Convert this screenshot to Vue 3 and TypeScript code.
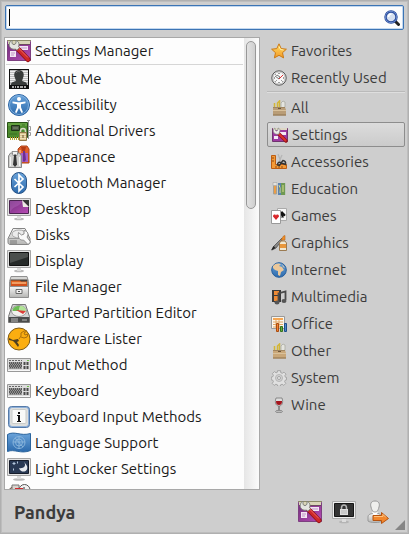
<script setup lang="ts">
import { ref } from 'vue'

interface Entry {
  name: string
  icon: string
}

const query = ref<string>('')
const selected = ref<string>('Settings')

/* Artwork drawn on a 24 unit grid */
const large: Record<string, string> = {
  settings: `<path d="M.5 2.500h23v19H.5z" fill="url(#purple)" stroke="#7d3f80"/><path d="M1 2h22v3H1z" fill="#d9d6b8"/><path d="M0 1.500h24" stroke="#8d8a69"/><path d="M1 5.500h22" stroke="#6b4a5e"/><path d="M12 7h9v4h-9zM3 12h6v6H3z" fill="#f3e6f4"/><path d="M14 9h6M4 14h4M4 16h3" stroke="#c093c6"/><path d="M10.500 9.500L21 20.500" stroke="#8a1215" stroke-width="5" stroke-linecap="round"/><path d="M10.500 9.500L21 20.500" stroke="#cf2729" stroke-width="3.600" stroke-linecap="round"/><path d="M11.500 9L21 18.500" stroke="#ee6a64" stroke-width="1"/><path d="M5 1.200v3.300l2 1.200L9 4.300V1.400c3 1 3.500 4 2.500 6l1 1.300-2.700 2.600L8.500 10C5 11 2 8.500 2.200 5.500 2.300 3.500 3.500 1.800 5 1.200z" fill="#e4e6e0" stroke="#7b7f76" stroke-width=".9"/>`,
  about: `<path d="M2 2h20v20H2z" fill="#101010"/><path d="M3 3h18v15H3z" fill="#bdbdbd"/><path d="M3 4.500h18M3 6.500h18M3 8.500h18M3 10.500h18M3 12.500h18M3 14.500h18" stroke="#efefef"/><path d="M4 18c0-3 2-3 5-4l-1-3C6 7 8 3 12 3s6 4 4 8l-1 3c3 1 5 1 5 4z" fill="#393c3b"/><path d="M9 6c1-2 3-2 4-1" stroke="#666" fill="none"/><path d="M5 20h2m1 0h1m1 0h2m1 0h3m1 0h2" stroke="#ddd" stroke-width="1.500"/>`,
  access: `<circle cx="12" cy="12" r="10.500" fill="url(#blue)" stroke="#2a63a3"/><circle cx="12" cy="12" r="9.500" fill="none" stroke="#8ab9e4" stroke-width=".8"/><circle cx="12" cy="6" r="2" fill="#fff"/><path d="M5.500 8.500L11 9.300h2l5.500-.8v1.700L14 11.300v3l2 5-1.500.7L12 15l-2.500 5-1.500-.7 2-5v-3l-4.500-1.100z" fill="#fff"/>`,
  drivers: `<path d="M20 1.500h3M21.500 1v19M21 7.500h2.500v4H21m0 2h2.500v3H21" stroke="#999" stroke-width="1" fill="none"/><path d="M.5 3.500h20v15H.5z" fill="#4c8a2e" stroke="#275015"/><path d="M1 4h19v3H1z" fill="#63a041"/><path d="M4.500 6.500h8v5h-8z" fill="#4b5845" stroke="#1d3515"/><path d="M6 9h5" stroke="#839078"/><path d="M3.500 18v3m2-3v3m2-3v3m2-3v3m2-3v3" stroke="#b7a936"/><path d="M2 15h8M15 6h3" stroke="#3a6f20"/><path d="M13.500 14v-2c0-3.500 5-3.500 5 0v2" fill="none" stroke="#d9d8c6" stroke-width="1.500"/><path d="M12.500 13.500h7v8h-7z" fill="#dcc58f" stroke="#92794a"/><path d="M13 15.500h6m-6 2h6m-6 2h6" stroke="#f0e1ba"/><path d="M15.500 16h1v3h-1z" fill="#6b5631"/>`,
  appearance: `<path d="M11 4l3-3h6l2 3v14H12z" fill="#e2602a" stroke="#ad441a"/><path d="M14 2h5l-1 4h-3z" fill="#b33c14"/><path d="M14 8h7v9h-7z" fill="#a45fc6"/><path d="M16 6h2l1 9-2 2-1-1z" fill="#6d2f92"/><path d="M12 5h2v3h-2z" fill="#f6a166"/><path d="M1.500 11l2-3h9l2 3v11.500h-13z" fill="#cfcfcd" stroke="#878787"/><path d="M5 6.500h6l-1 4H6z" fill="#f2f2f2" stroke="#777" stroke-width=".8"/><path d="M7.200 9.500h1.800l1 10-2 2.500-2-2.500z" fill="#363636"/><path d="M3.500 12v9m9-9v9" stroke="#f3f3f3"/>`,
  bluetooth: `<rect x="4.500" y="1.500" width="15" height="21" rx="7.500" fill="url(#blue)" stroke="#2b5588"/><path d="M7.500 8l8.500 8-4 4V4l4 4-8.500 8" fill="none" stroke="#fff" stroke-width="1.700"/>`,
  desktop: `<ellipse cx="12" cy="22" rx="5" ry="1.300" fill="#bbb"/><path d="M10 18h4v4h-4z" fill="#ddd"/><path d="M.5 1.500h23v17H.5z" fill="#e3e3e3" stroke="#a5a5a5"/><path d="M2.500 3.500h19v13h-19z" fill="url(#purple)" stroke="#4b2450"/><path d="M3 15C7 8 12 11 15 4L3 4z" fill="#c176c8" opacity=".35"/><path d="M15 3h7v7z" fill="#353535"/><path d="M15 3l7 7h-6z" fill="#eceae3"/>`,
  disks: `<path d="M6 5.500h12l5 10v4c0 1-1 2-2 2H3c-1 0-2-1-2-2v-4z" fill="url(#metal)" stroke="#858585"/><ellipse cx="12" cy="11" rx="7" ry="4" fill="#ececec" stroke="#aaa"/><path d="M1.500 15.500H12" stroke="#999"/><path d="M3 18h7m-7 2h7" stroke="#777"/><path d="M11.500 9.500l3 2.500 2.500-1V7.500c4 .5 5 4 3 6.500l3.500 5-2.500 2.500-4.500-4.500c-4 1-6-3-5-7.500z" fill="#fafafa" stroke="#858585" stroke-width=".9"/>`,
  display: `<ellipse cx="12" cy="22" rx="5" ry="1.300" fill="#bbb"/><path d="M10 18h4v4h-4z" fill="#ddd"/><path d="M.5 1.500h23v17H.5z" fill="#e3e3e3" stroke="#a5a5a5"/><path d="M2.500 3.500h19v13h-19z" fill="#252928" stroke="#111"/><path d="M3 4h18v4L3 14z" fill="#4b4f4d"/>`,
  files: `<path d="M4 1.500h16l1.500 5v6h-19v-6z" fill="#d5d5d3" stroke="#909090"/><path d="M3.500 4.500h17v7h-17z" fill="#4a423c"/><path d="M4 5.500h9l1 1h6v5H4z" fill="#e2631f"/><path d="M5 8h14" stroke="#ffd7a6"/><path d="M4 9h16v3H4z" fill="#d2501a"/><path d="M2.500 11.500h19v11h-19z" fill="url(#metal)" stroke="#8f8f8f"/><path d="M9 14.500h6v4H9z" fill="#f1f1f1" stroke="#6a6a6a"/><path d="M11 16.500h2" stroke="#555"/>`,
  gparted: `<path d="M5.500 3.500h13l4 12v6h-21v-6z" fill="#d2d2d2" stroke="#777"/><path d="M2 16h20v5H2z" fill="#4a4c4b"/><ellipse cx="12" cy="10" rx="7.500" ry="5.500" fill="#f3f3ee" stroke="#999"/><path d="M12 10H5.500c0-4 4-5.500 7.500-5z" fill="#6dbd56"/><path d="M12 10l1-5c4 0 6 2 6 5z" fill="#b1e496"/><path d="M9 9l10 1-3 3z" fill="#dd3d39"/><path d="M4 18h7m-7 2h7M15 19h5" stroke="#bbb"/>`,
  hardware: `<circle cx="12" cy="12" r="11" fill="#fbae10" stroke="#7c5a18"/><path d="M12 12l2-3v-3l3-2h3l-3 2 1 2 3-1-1 3-3 1-3-1" fill="none" stroke="#a9700e"/><path d="M2 11l4 2 5-1 1 2-2 1 2 3-1 2-3-4-2-2-4-1z" fill="#4e3f22"/>`,
  keyboard: `<path d="M.5 5.500h23v13H.5z" fill="#dcdcdc" stroke="#999"/><path d="M2 7.500h13" stroke="#666" stroke-dasharray="2 1"/><path d="M2 9h13v7H2z" fill="#9b9b9b"/><path d="M2 10h13M2 13h13" stroke="#444" stroke-width="1.500" stroke-dasharray="1 1"/><path d="M3 11.500h12M3 14.500h12" stroke="#555" stroke-width="1.500" stroke-dasharray="1 1"/><path d="M17.500 9v7M20.500 9v7" stroke="#4a4a4a" stroke-width="2" stroke-dasharray="3 1"/><path d="M20 7.500h2" stroke="#6cc04a"/><path d="M1 17.500h22" stroke="#f7f7f7"/>`,
  inputs: `<rect x="1.500" y="1.500" width="21" height="21" rx="3" fill="#8fb0d8" stroke="#557aa8"/><rect x="3" y="3" width="18" height="18" rx="2" fill="#dedfdd"/><rect x="5" y="4.500" width="14" height="14" rx="1" fill="#fafaf8" stroke="#c9cccb"/><path d="M11 7h2v2h-2zM10 10h3v6h1v1h-4v-1h1v-5h-1z" fill="#111"/>`,
  language: `<path d="M.5 3.500c7-4 13 2 23-1v17c-10 4-16-2-23 1z" fill="url(#blue)" stroke="#2c659d"/><g fill="none" stroke="#8db8de" stroke-width=".9"><circle cx="12" cy="11.500" r="6"/><circle cx="12" cy="11.500" r="3.500"/><path d="M6 11h12M12 6v12M8 7l8 9"/></g>`,
  locker: `<ellipse cx="12" cy="22.500" rx="6" ry="1.300" fill="#bbb"/><path d="M10 18h4v4h-4z" fill="#ddd"/><path d="M.5 1.500h23v17H.5z" fill="#e3e3e3" stroke="#a5a5a5"/><path d="M2.500 3.500h19v13h-19z" fill="#293954" stroke="#151b29"/><path d="M17 5c3 4-1 7-5 6 2 6 10 4 8-2-1-2-2-3-3-4z" fill="#e6e9ee"/><path d="M7 5v3M5.500 6.500h3m2-2v2m-4 5v2" stroke="#b6c9de"/>`,
  printers: `<path d="M.5 8l5-4.500L11 6v14H.5z" fill="#cfa783" stroke="#62544b"/><path d="M5 2h7v5H5z" fill="#d8d3cd" stroke="#777"/><circle cx="17.500" cy="7" r="5.500" fill="#f1f1f1" stroke="#555"/><path d="M8 5h8v3H8z" fill="#d2292d"/><path d="M17 4v3l3 1" stroke="#333" fill="none"/>`,
  lock: `<ellipse cx="12" cy="22" rx="5" ry="1.300" fill="#b5b5b5"/><path d="M10 18h4v4h-4z" fill="#ddd"/><path d="M.5 1.500h23v17H.5z" fill="#eee" stroke="#aaa"/><path d="M2.500 3.500h19v13h-19z" fill="#333" stroke="#151515"/><path d="M9.500 10V8c0-4 5-4 5 0v2" fill="none" stroke="#b5b5b5" stroke-width="1.500"/><path d="M8 9h8v6H8z" fill="#dedede"/><path d="M9 11h6m-6 2h6" stroke="#b5b5b5"/>`,
  logout: `<path d="M2 21v-4c0-3 3-3 6-4h3c3 1 5 2 5 5v3c-2 2-12 2-14 0z" fill="url(#metal)" stroke="#999"/><path d="M6 12h6l-3 5z" fill="#fff"/><path d="M9 1c4 0 5 3 4 6-1 4-2 5-4 5s-3-1-4-5C4 4 5 1 9 1z" fill="#efefed" stroke="#999"/><path d="M7 15.500h8.500v-3l7 6-7 5v-3H7z" fill="#f2872d" stroke="#b55310"/><path d="M8 16.500h9v-2l3 3" fill="none" stroke="#ffc17e"/>`
}

const toolbox = (wood: string): string =>
  `<path d="M3.500 8V3M6.500 8V3l2-2v7" fill="none" stroke="#d3b637" stroke-width="1.500"/><path d="M10 8V3l2-2 2 1v5l-2 1z" fill="#e4e4df" stroke="#a9a99f" stroke-width=".8"/><path d="M2 7h12l1 3v5.500H2z" fill="${wood}"/><path d="M2 7.500h12" stroke="#a08560"/><path d="M2 10.500h13" stroke="#d9c19b"/><path d="M2 15h13" stroke="#8d7350"/><path d="M7 8.500h3" stroke="#6d563a"/>`

/* Artwork drawn on a 16 unit grid */
const small: Record<string, string> = {
  favorites: `<path d="M8 .8l2.200 4.800 5.200.6-3.900 3.500 1.100 5.200L8 12.300l-4.600 2.600 1.100-5.200L.6 6.200l5.200-.6z" fill="url(#gold)" stroke="#cc7a16" stroke-linejoin="round"/><path d="M8 3.500l1.500 3 3 .5" stroke="#fff0a8" fill="none"/>`,
  recent: `<circle cx="8" cy="8" r="7.200" fill="#eee" stroke="#555"/><circle cx="8" cy="8" r="6" fill="#f8f8f8" stroke="#aaa" stroke-width=".7"/><path d="M8 3v1m0 8v1M3 8h1m8 0h1M4.500 4.500l1 1m5 5l1 1m-7 0l1-1" stroke="#444"/><path d="M4 6l4 3 1-2-3-2" fill="none" stroke="#555" stroke-width=".8"/><path d="M8 9l4-4" stroke="#d33"/>`,
  all: toolbox('#b99d77'),
  settings: `<path d="M.5 1.500h15v13H.5z" fill="#9d3aa1" stroke="#70336f"/><path d="M1 1h14v2H1z" fill="#ddd6c4"/><path d="M8 5h6v3H8zM2 9h4v3H2z" fill="#f5eaf5"/><path d="M7 7l7 7" stroke="#941519" stroke-width="3.400" stroke-linecap="round"/><path d="M7 7l7 7" stroke="#dc302d" stroke-width="2"/><path d="M3 1v2l1.500 1L6 3V1c2 .5 2.500 2.500 1.500 4L7 7C4 8 1 6 1.300 3.500 1.500 2 2 1.500 3 1z" fill="#eceee8" stroke="#85877f" stroke-width=".7"/>`,
  accessories: `<path d="M.5 1.500h4v9h11v4H.5z" fill="#f49a36" stroke="#bd5c12"/><path d="M1 4h2M1 7h2m2 5v2m3-2v2m3-2v2" stroke="#8d4a17"/><path d="M7 0l3 8M11 1L8 8" stroke="#b5b5b5" stroke-width="1.300"/><path d="M6.500 11c0-3 2-3.500 3.500-2l2-2.500c2 0 3 2 2.500 4l-2.500-1-2-.5-1.500 2.500z" fill="none" stroke="#353535" stroke-width="1.500"/>`,
  education: `<path d="M2.500 4v9h3V4z" fill="#ec9d45" stroke="#a3a097"/><path d="M2 1.500h4v3H2z" fill="#e3e3df" stroke="#aaa" stroke-width=".7"/><path d="M7 2h3v12H7z" fill="#5c82b0"/><path d="M6.500 1v13" stroke="#c8cdca"/><path d="M10 2h4v12h-4z" fill="#6f9953"/><path d="M14.500 2v12" stroke="#bcc7ba"/><path d="M8 4l1 3v5m3-8v7" stroke="#dcdc8d"/>`,
  games: `<path d="M6.500.5h9v12h-9z" fill="#f7f7f7" stroke="#aaa"/><path d="M11 3l3.500 3.500c0 2-2 2-2.500 1l1 2h-3l1-2c-1 1-3 1-3-1z" fill="#111"/><path d="M.5 2.500h9v13h-9z" fill="#fff" stroke="#999"/><path d="M5 12L2 8.500c0-2.500 3-2.500 3-.5 0-2 3-2 3 .5z" fill="#d8272b"/>`,
  graphics: `<path d="M1 15l2-4 8-8 1 1-7 9z" fill="#888" stroke="#444" stroke-width=".7"/><path d="M0 15.500l2.500-4.500 2 2z" fill="#222"/><path d="M8.500 15.500V8l1.500-2h4l1.500 2v7.500z" fill="#f1e8d0" stroke="#9b7b52"/><path d="M10 5l2.500-4 1.500-.5V5z" fill="#f28d26" stroke="#b56c22" stroke-width=".6"/><path d="M9 9h6v4H9z" fill="#e8973b"/>`,
  internet: `<circle cx="8" cy="8" r="7.300" fill="url(#blue)" stroke="#255e9d"/><path d="M2 4c2-3 6-3 8-2l-2 2 3 1 2 3-3 2-1 4-2-1V9L4 8 2 6z" fill="#ecc89a"/><path d="M11 2l3 4-2-1z" fill="#ecc89a"/>`,
  multimedia: `<path d="M1 1h9v12H1z" fill="#3b3b3b"/><path d="M3 2h5v4H3zM3 7h5v5H3z" fill="#ee8a35"/><path d="M7.500 13V4.500l7-2V11" fill="none" stroke="#4a4a4a" stroke-width="1.800"/><ellipse cx="6" cy="13.500" rx="2.500" ry="2" fill="#555"/><ellipse cx="13" cy="12" rx="2.500" ry="2" fill="#555"/>`,
  office: `<path d="M.5.5h13v12H.5z" fill="#faf6ed" stroke="#999"/><path d="M2 2h10v2H2z" fill="#f5a754"/><path d="M2 6h10M2 8.500h10M2 11h8M5 4v8m3-8v8" stroke="#e2a662"/><path d="M5.500 7.500h2v8h-2z" fill="#f28131" stroke="#a94c11"/><path d="M9.500 10.500h2v5h-2z" fill="#64ad42" stroke="#35721b"/><path d="M13.500 7.500h2v8h-2z" fill="#4b89ca" stroke="#1f4e8a"/>`,
  other: toolbox('#c9a779'),
  system: `<path d="M6.500.7h3l.3 2 1.500.6 1.700-1.200 2 2-1.200 1.700.6 1.400 1.100.2v2.400l-1.400.5-.5 1.400 1.200 1.700-2 2-1.700-1.200-1.500.6-.3 1.500h-2.600l-.3-1.500-1.500-.6-1.700 1.200-2-2 1.200-1.700-.6-1.500-1.500-.3V7l1.500-.3.6-1.400L1.400 3.600l2-2 1.700 1.200 1.200-.5z" fill="#e0e0e0" stroke="#9a9a9a" stroke-width=".8"/><circle cx="8" cy="8" r="3.500" fill="#d2d2d2" stroke="#b5b5b5"/><circle cx="8" cy="8" r="1.500" fill="#eee" stroke="#a5a5a5"/>`,
  wine: `<path d="M5 1h6c2 6-1 8-3 8S3 7 5 1z" fill="#ddd" stroke="#777" stroke-width=".8"/><path d="M5 4h6c0 3-1 4-3 4S5 7 5 4z" fill="#a5151d"/><path d="M8 9v5" stroke="#777" stroke-width="1.500"/><ellipse cx="8" cy="14.500" rx="3.500" ry="1.200" fill="#bbb" stroke="#777" stroke-width=".7"/>`,
  search: `<path d="M11 11l3.500 3.500" stroke="#222" stroke-width="3" stroke-linecap="round"/><circle cx="7" cy="7" r="5.500" fill="#d6e0f0" stroke="#25479a" stroke-width="2.400"/><circle cx="7" cy="7" r="5.700" fill="none" stroke="#7b9bd5" stroke-width=".8"/><path d="M4.500 7c0-2 1-3 3-3" fill="none" stroke="#fff" stroke-width="1.500"/>`
}

const apps: Entry[] = [
  { name: 'About Me', icon: 'about' },
  { name: 'Accessibility', icon: 'access' },
  { name: 'Additional Drivers', icon: 'drivers' },
  { name: 'Appearance', icon: 'appearance' },
  { name: 'Bluetooth Manager', icon: 'bluetooth' },
  { name: 'Desktop', icon: 'desktop' },
  { name: 'Disks', icon: 'disks' },
  { name: 'Display', icon: 'display' },
  { name: 'File Manager', icon: 'files' },
  { name: 'GParted Partition Editor', icon: 'gparted' },
  { name: 'Hardware Lister', icon: 'hardware' },
  { name: 'Input Method', icon: 'keyboard' },
  { name: 'Keyboard', icon: 'keyboard' },
  { name: 'Keyboard Input Methods', icon: 'inputs' },
  { name: 'Language Support', icon: 'language' },
  { name: 'Light Locker Settings', icon: 'locker' },
  { name: 'Printers', icon: 'printers' }
]

const shortcuts: Entry[] = [
  { name: 'Favorites', icon: 'favorites' },
  { name: 'Recently Used', icon: 'recent' }
]

const categories: Entry[] = [
  { name: 'All', icon: 'all' },
  { name: 'Settings', icon: 'settings' },
  { name: 'Accessories', icon: 'accessories' },
  { name: 'Education', icon: 'education' },
  { name: 'Games', icon: 'games' },
  { name: 'Graphics', icon: 'graphics' },
  { name: 'Internet', icon: 'internet' },
  { name: 'Multimedia', icon: 'multimedia' },
  { name: 'Office', icon: 'office' },
  { name: 'Other', icon: 'other' },
  { name: 'System', icon: 'system' },
  { name: 'Wine', icon: 'wine' }
]

const actions: Entry[] = [
  { name: 'All Settings', icon: 'settings' },
  { name: 'Lock Screen', icon: 'lock' },
  { name: 'Log Out', icon: 'logout' }
]
</script>

<template>
  <div class="menu">
    <svg class="defs" width="0" height="0" aria-hidden="true">
      <defs>
        <linearGradient id="purple" x2="1" y2="1">
          <stop stop-color="#70307c" /><stop offset="1" stop-color="#b84bb5" />
        </linearGradient>
        <linearGradient id="blue" x2="0" y2="1">
          <stop stop-color="#6aa3da" /><stop offset="1" stop-color="#2c6aac" />
        </linearGradient>
        <linearGradient id="metal" x2="0" y2="1">
          <stop stop-color="#f5f5f5" /><stop offset="1" stop-color="#b5b5b3" />
        </linearGradient>
        <linearGradient id="gold" x2="0" y2="1">
          <stop stop-color="#ffe06c" /><stop offset="1" stop-color="#f49a24" />
        </linearGradient>
      </defs>
    </svg>

    <label class="search">
      <span class="caret"></span>
      <input v-model="query" type="text" aria-label="Search" />
      <svg class="small" viewBox="0 0 16 16" v-html="small.search"></svg>
    </label>

    <main class="body">
      <section class="panel">
        <div class="list">
          <button class="app" type="button">
            <svg class="large" viewBox="0 0 24 24" v-html="large.settings"></svg>
            <span>Settings Manager</span>
          </button>
          <hr />
          <button v-for="app in apps" :key="app.name" class="app" type="button">
            <svg class="large" viewBox="0 0 24 24" v-html="large[app.icon]"></svg>
            <span>{{ app.name }}</span>
          </button>
        </div>
        <div class="track"><div class="thumb"></div></div>
      </section>

      <nav class="side">
        <button v-for="item in shortcuts" :key="item.name" class="category" type="button">
          <svg class="small" viewBox="0 0 16 16" v-html="small[item.icon]"></svg>
          <span>{{ item.name }}</span>
        </button>
        <hr />
        <button
          v-for="item in categories"
          :key="item.name"
          class="category"
          :class="{ active: item.name === selected }"
          type="button"
          @click="selected = item.name"
        >
          <svg class="small" viewBox="0 0 16 16" v-html="small[item.icon]"></svg>
          <span>{{ item.name }}</span>
        </button>
      </nav>
    </main>

    <footer class="footer">
      <strong>Pandya</strong>
      <div class="actions">
        <button v-for="action in actions" :key="action.name" type="button" :aria-label="action.name">
          <svg class="large" viewBox="0 0 24 24" v-html="large[action.icon]"></svg>
        </button>
      </div>
      <span class="grip"></span>
    </footer>
  </div>
</template>

<style>
body {
  margin: 0;
  background: #cecece;
}
</style>

<style scoped>
.menu {
  box-sizing: border-box;
  position: relative;
  display: flex;
  flex-direction: column;
  height: 100vh;
  padding: 4px 3px 0;
  border: 1px solid #b0b0b0;
  background: #cecece;
  box-shadow: inset 0 0 0 1px #bdbdbd;
  color: #3c3c3c;
  font: 15px/20px "Ubuntu", "Noto Sans", sans-serif;
}

.defs {
  position: absolute;
}

svg {
  display: block;
  flex: none;
}

.small {
  width: 16px;
  height: 16px;
}

.large {
  width: 24px;
  height: 24px;
}

button {
  margin: 0;
  border: 0;
  background: none;
  color: inherit;
  font: inherit;
  text-align: left;
  white-space: nowrap;
}

.search {
  box-sizing: border-box;
  display: flex;
  align-items: center;
  flex: none;
  height: 25px;
  margin: 0 1px;
  padding: 0 3px;
  border: 1px solid #3c74b4;
  border-radius: 2px;
  background: #fdfdfd;
  box-shadow: inset 0 0 0 1px #c3d8ef;
}

.caret {
  width: 1px;
  height: 17px;
  background: #000;
}

.search input {
  flex: 1;
  min-width: 0;
  padding: 0;
  border: 0;
  outline: 0;
  background: transparent;
  color: #1c1c1c;
  font: inherit;
  caret-color: transparent;
}

.body {
  display: flex;
  flex: 1;
  min-height: 0;
  gap: 7px;
  padding-top: 7px;
}

.panel {
  box-sizing: border-box;
  display: flex;
  flex: 0 0 256px;
  border: 1px solid #a8a8a8;
  background: #fdfdfd;
}

.list {
  flex: 1;
  min-width: 0;
  overflow: hidden;
  color: #1a1a1a;
}

.app {
  display: flex;
  align-items: center;
  gap: 4px;
  width: 100%;
  height: 26px;
  padding: 0 2px;
}

hr {
  height: 1px;
  margin: 0 1px 1px;
  border: 0;
  background: #d6d6d6;
}

.track {
  box-sizing: border-box;
  flex: 0 0 15px;
  padding: 3px 3px 0 2px;
  background: linear-gradient(90deg, #e6e6e6, #fbfbfb);
}

.thumb {
  box-sizing: border-box;
  height: 168px;
  border: 1px solid #989898;
  border-radius: 5px;
  background: linear-gradient(90deg, #e2e2e2, #cfcfcf);
}

.side {
  flex: 1;
  min-width: 0;
}

.category {
  box-sizing: border-box;
  display: flex;
  align-items: center;
  gap: 4px;
  width: 100%;
  height: 27px;
  padding: 0 4px;
}

.side hr {
  height: 2px;
  margin: 0 0 1px;
  background: linear-gradient(#bababa 50%, #dedede 50%);
}

.category.active {
  height: 25px;
  margin: 1px 0;
  border: 1px solid #8d8d8d;
  border-radius: 2px;
  background: linear-gradient(#dcdcdc, #cbcbcb);
}

.footer {
  display: flex;
  align-items: center;
  justify-content: space-between;
  flex: none;
  height: 43px;
  padding: 0 15px 0 10px;
}

.footer strong {
  font-size: 18px;
  line-height: 24px;
}

.actions {
  display: flex;
  gap: 10px;
}

.actions button {
  padding: 0;
}

.grip {
  position: absolute;
  right: 3px;
  bottom: 3px;
  width: 10px;
  height: 10px;
  background: #858585;
  clip-path: polygon(100% 0, 100% 100%, 0 100%);
}
</style>
